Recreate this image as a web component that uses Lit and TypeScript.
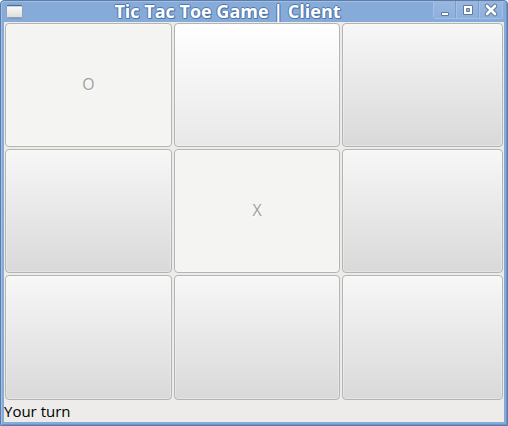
import { LitElement, html, css } from "lit";
import { customElement, state } from "lit/decorators.js";
import { classMap } from "lit/directives/class-map.js";

type Mark = "" | "O" | "X";

@customElement("window-title-bar")
class WindowTitleBar extends LitElement {
  static styles = css`
    :host {
      display: grid;
      grid-template-columns: 16px 1fr auto;
      column-gap: 12px;
      height: 21px;
      padding: 0 1px 0 2px;
      color: #fff;
    }
    .app-icon {
      display: block;
      margin-top: 3px;
    }
    .title {
      margin: 0;
      text-align: center;
      font: bold 18px/20px "Open Sans", "Noto Sans", sans-serif;
      white-space: nowrap;
      text-shadow: 1px 0 #4f78ae, -1px 0 #4f78ae, 0 1px #4f78ae, 0 -1px #4f78ae, 1px 1px #4f78ae;
    }
    .controls {
      display: flex;
      height: 18px;
      border: 1px solid #a3c1e6;
      border-top: 0;
      border-radius: 0 0 3px 3px;
      box-sizing: border-box;
    }
    button {
      width: 23px;
      height: 17px;
      padding: 0;
      border: 0;
      border-right: 1px solid #a3c1e6;
      background: linear-gradient(#9ab8df, #8cafdc);
      box-shadow: inset -1px 0 #799fcf;
    }
    button:last-child {
      width: 22px;
      border-right: 0;
      box-shadow: none;
    }
    button svg {
      display: block;
      margin: 0 auto;
    }
  `;

  render() {
    return html`
      <svg class="app-icon" width="18" height="16" viewBox="0 0 18 16" aria-hidden="true">
        <defs>
          <linearGradient id="sheet" x2="0" y2="1">
            <stop offset="0" stop-color="#fff" />
            <stop offset="1" stop-color="#dcdcd8" />
          </linearGradient>
        </defs>
        <ellipse cx="9" cy="13.5" rx="8" ry="1.5" fill="#6484b0" opacity=".6" />
        <rect x=".5" y=".5" width="16" height="13" rx="1" fill="url(#sheet)" stroke="#92a2b4" />
        <path d="M1 1h15v1H1z" fill="#3f6eae" />
        <path d="M1 2h15v1H1z" fill="#c5d5e8" />
      </svg>
      <h1 class="title">Tic Tac Toe Game | Client</h1>
      <div class="controls">
        <button aria-label="Minimize">
          <svg width="22" height="17" viewBox="0 0 22 17">
            <path d="M7.5 11.5h7v3h-7z" fill="#fff" stroke="#5f7b9d" />
          </svg>
        </button>
        <button aria-label="Maximize">
          <svg width="22" height="17" viewBox="0 0 22 17">
            <path d="M6.5 4.5h9v9h-9z" fill="#fff" stroke="#5f7b9d" />
            <path d="M9.5 7.5h3v3h-3z" fill="#9ab8df" stroke="#5f7b9d" />
          </svg>
        </button>
        <button aria-label="Close">
          <svg width="22" height="17" viewBox="0 0 22 17">
            <path d="M7 5l8 8m0-8l-8 8" stroke="#5f7b9d" stroke-width="4.6" stroke-linecap="round" />
            <path d="M7 5l8 8m0-8l-8 8" stroke="#fff" stroke-width="2.6" stroke-linecap="round" />
          </svg>
        </button>
      </div>
    `;
  }
}

@customElement("app-root")
class AppRoot extends LitElement {
  @state() private board: Mark[] = ["O", "", "", "", "X", "", "", "", ""];
  @state() private hovered = 1;

  static styles = css`
    :host {
      display: block;
      font-family: "Open Sans", "Noto Sans", sans-serif;
      background: #fff;
    }
    .window {
      display: flex;
      flex-direction: column;
      min-height: 100vh;
      box-sizing: border-box;
      padding: 0 3px 3px;
      background: #86abd9;
      border: 1px solid #5f7ca6;
      border-radius: 4px 4px 0 0;
      box-shadow: inset 1px 1px #a0bfe5, inset -1px -1px #6c93c8;
    }
    .content {
      flex: 1;
      display: flex;
      flex-direction: column;
      background: #edeceb;
    }
    .board {
      flex: 1;
      display: grid;
      grid-template-columns: 167fr 166fr 161fr;
      grid-template-rows: 124fr 124fr 125fr;
      gap: 2px;
      padding: 1px;
    }
    .cell {
      min-width: 0;
      padding: 0 0 2px;
      border: 1px solid #b3b5b1;
      border-radius: 4px;
      background: linear-gradient(#f7f7f7, #d9d9d9);
      box-shadow: inset 0 0 0 1px rgba(255, 255, 255, 0.3);
      font: 16px/20px "Open Sans", "Noto Sans", sans-serif;
    }
    .cell.hover {
      background: linear-gradient(#ffffff, #e8e8e8);
    }
    .cell:disabled {
      background: #f4f4f2;
      color: #a0a09c;
      text-shadow: 1px 1px #fff;
    }
    .status {
      margin: 0;
      font-size: 15px;
      line-height: 21px;
      color: #000;
    }
  `;

  private play(index: number) {
    this.board = this.board.map((mark, i) => (i === index ? "X" : mark));
  }

  render() {
    return html`
      <main class="window">
        <window-title-bar></window-title-bar>
        <div class="content">
          <div class="board">
            ${this.board.map(
              (mark, i) => html`<button
                class=${classMap({ cell: true, hover: i === this.hovered })}
                aria-label=${mark || `Empty square ${i + 1}`}
                ?disabled=${mark !== ""}
                @mouseenter=${() => (this.hovered = i)}
                @click=${() => this.play(i)}
              >${mark}</button>`
            )}
          </div>
          <p class="status" role="status">Your turn</p>
        </div>
      </main>
    `;
  }
}
